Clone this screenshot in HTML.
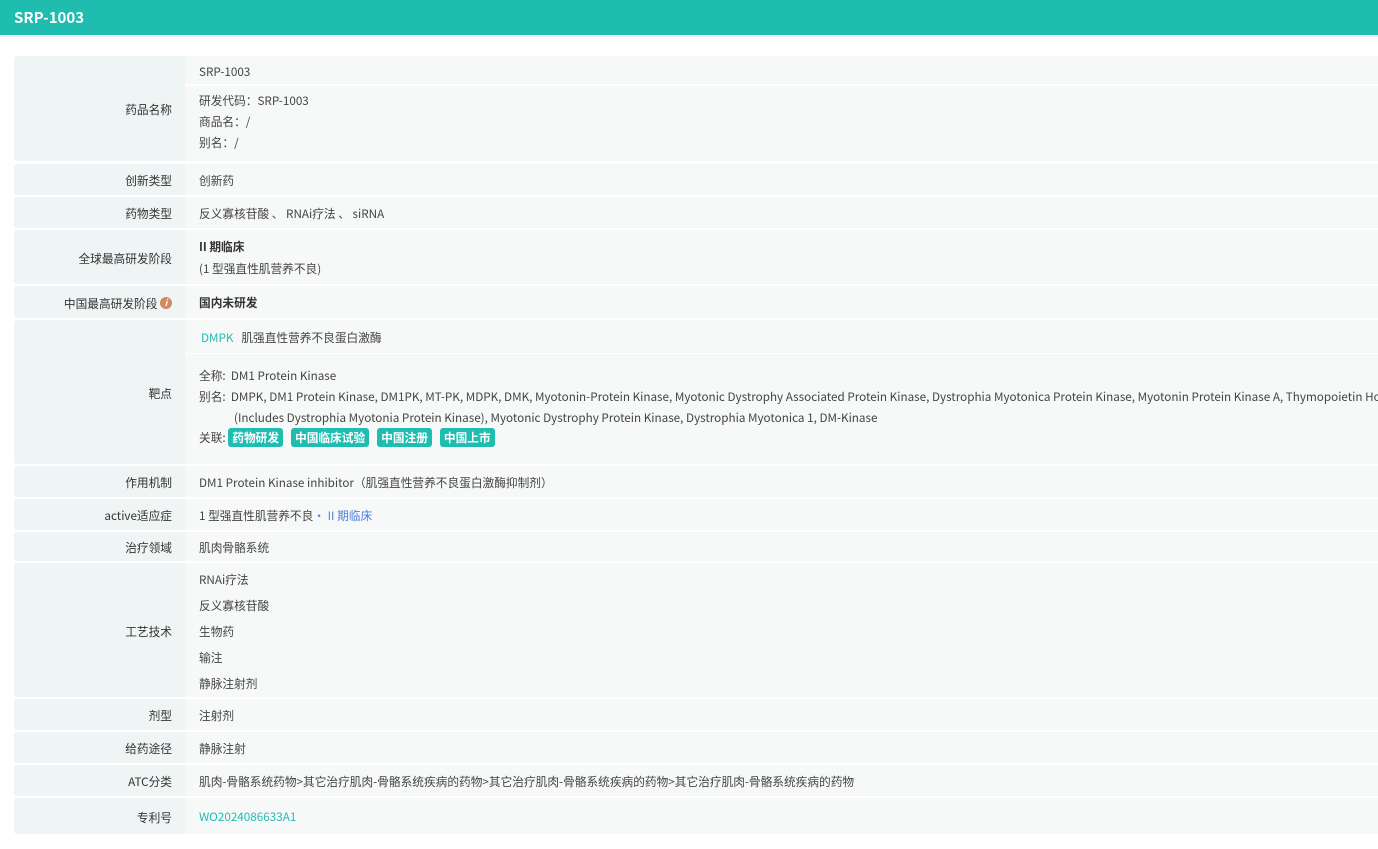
<!DOCTYPE html>
<html><head><meta charset="utf-8"><style>
*{margin:0;padding:0;box-sizing:border-box}
body{width:1378px;height:849px;background:#fff;font-family:"Noto Sans CJK SC","Liberation Sans",sans-serif;font-size:11.7px;line-height:17px;color:#444;position:relative;overflow:hidden}
.hd{position:absolute;left:0;top:0;width:1378px;height:35px;background:#1fbcb0;color:#fff;font-weight:bold;font-size:15px;line-height:35px;padding-left:14px}
.hl{position:absolute;left:0;top:36px;width:1378px;height:1px;background:#e8eeee}
.r{position:absolute;left:14px;width:1364px}
.l{position:absolute;left:0;top:0;bottom:0;width:171px;background:#eef5f4;border-radius:3px 0 0 3px;text-align:right;padding-right:13px;padding-top:2px;display:flex;align-items:center;justify-content:flex-end;color:#333}
.v{position:absolute;left:171px;top:0;bottom:0;right:0;background:#f7f9f9;padding-left:14px;overflow:hidden}
.t{position:absolute;left:14px;white-space:nowrap}
.g{color:#1fbcb0}
.tag{display:inline-block;background:#1fbcb0;color:#fff;border-radius:3px;padding:0 4px;height:19px;line-height:19px;margin-right:8px;font-weight:bold}
.sep{position:absolute;left:0;right:0;height:2px;background:#fff}
</style></head><body>
<div class="hd">SRP-1003</div><div class="hl"></div>

<div class="r" style="top:56px;height:105px"><div class="l">药品名称</div><div class="v">
<div class="t" style="top:7px">SRP-1003</div><div class="sep" style="top:28px"></div>
<div class="t" style="top:36px">研发代码：SRP-1003</div>
<div class="t" style="top:57px">商品名：/</div>
<div class="t" style="top:78px">别名：/</div></div></div>

<div class="r" style="top:164px;height:31px"><div class="l">创新类型</div><div class="v"><div class="t" style="top:8px">创新药</div></div></div>
<div class="r" style="top:197px;height:31px"><div class="l">药物类型</div><div class="v"><div class="t" style="top:8px">反义寡核苷酸 、 RNAi疗法 、 siRNA</div></div></div>
<div class="r" style="top:230px;height:54px"><div class="l">全球最高研发阶段</div><div class="v"><div class="t" style="top:8px;font-weight:bold;color:#333">II 期临床</div><div class="t" style="top:30px">(1 型强直性肌营养不良)</div></div></div>
<div class="r" style="top:286px;height:32px"><div class="l">中国最高研发阶段&nbsp;<span style="display:inline-block;width:12px;height:12px;border-radius:50%;background:#d08a5e;color:#fff;font-size:9px;line-height:12px;text-align:center;font-style:italic;font-weight:bold">i</span></div><div class="v"><div class="t" style="top:8px;font-weight:bold;color:#333">国内未研发</div></div></div>

<div class="r" style="top:320px;height:144px"><div class="l">靶点</div><div class="v">
<div class="t" style="top:9px;left:16px"><span class="g">DMPK</span>&nbsp;&nbsp; 肌强直性营养不良蛋白激酶</div><div class="sep" style="top:33px;height:1px"></div>
<div class="t" style="top:47px">全称:&nbsp; DM1 Protein Kinase</div>
<div class="t" style="top:68px">别名:&nbsp; DMPK, DM1 Protein Kinase, DM1PK, MT-PK, MDPK, DMK, Myotonin-Protein Kinase, Myotonic Dystrophy Associated Protein Kinase, Dystrophia Myotonica Protein Kinase, Myotonin Protein Kinase A, Thymopoietin Homolog,</div>
<div class="t" style="top:89px;left:49px">(Includes Dystrophia Myotonia Protein Kinase), Myotonic Dystrophy Protein Kinase, Dystrophia Myotonica 1, DM-Kinase</div>
<div class="t" style="top:108px">关联:&nbsp;<span class="tag">药物研发</span><span class="tag">中国临床试验</span><span class="tag">中国注册</span><span class="tag">中国上市</span></div>
</div></div>

<div class="r" style="top:466px;height:31px"><div class="l">作用机制</div><div class="v"><div class="t" style="top:8px">DM1 Protein Kinase inhibitor（肌强直性营养不良蛋白激酶抑制剂）</div></div></div>
<div class="r" style="top:499px;height:31px"><div class="l">active适应症</div><div class="v"><div class="t" style="top:8px">1 型强直性肌营养不良<span style="color:#4a7fe0">• II 期临床</span></div></div></div>
<div class="r" style="top:532px;height:29px"><div class="l">治疗领域</div><div class="v"><div class="t" style="top:7px">肌肉骨骼系统</div></div></div>
<div class="r" style="top:563px;height:134px"><div class="l">工艺技术</div><div class="v">
<div class="t" style="top:8px">RNAi疗法</div><div class="t" style="top:34px">反义寡核苷酸</div><div class="t" style="top:60px">生物药</div><div class="t" style="top:86px">输注</div><div class="t" style="top:112px">静脉注射剂</div></div></div>
<div class="r" style="top:699px;height:31px"><div class="l">剂型</div><div class="v"><div class="t" style="top:8px">注射剂</div></div></div>
<div class="r" style="top:732px;height:31px"><div class="l">给药途径</div><div class="v"><div class="t" style="top:8px">静脉注射</div></div></div>
<div class="r" style="top:765px;height:31px"><div class="l">ATC分类</div><div class="v"><div class="t" style="top:8px">肌肉-骨骼系统药物&gt;其它治疗肌肉-骨骼系统疾病的药物&gt;其它治疗肌肉-骨骼系统疾病的药物&gt;其它治疗肌肉-骨骼系统疾病的药物</div></div></div>
<div class="r" style="top:798px;height:36px"><div class="l">专利号</div><div class="v"><div class="t g" style="top:10px">WO2024086633A1</div></div></div>
</body></html>
